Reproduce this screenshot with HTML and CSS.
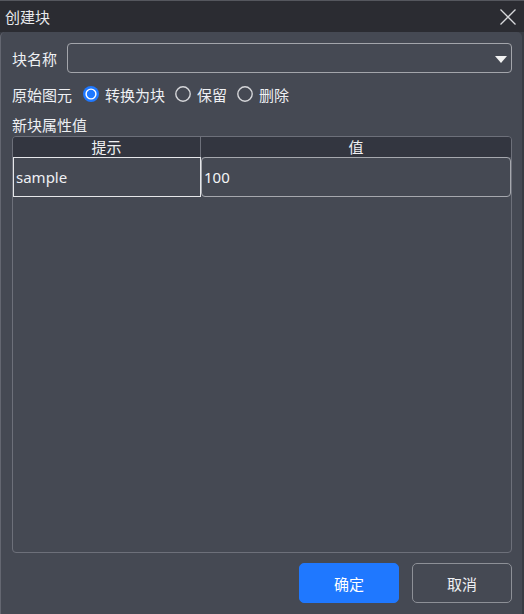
FILE: index.html
```html
<!DOCTYPE html>
<html lang="zh-CN">
<head>
<meta charset="utf-8">
<title>创建块</title>
<link rel="stylesheet" href="styles.css">
</head>
<body>
<div class="window">
  <div class="titlebar">
    <span class="title">创建块</span>
    <svg class="close" width="16" height="16" viewBox="0 0 16 16"><path d="M0.5 0.5 L15.5 15.5 M15.5 0.5 L0.5 15.5" stroke="#d8d9dc" stroke-width="1.3" fill="none"/></svg>
  </div>
  <div class="content">
    <div class="row name-row">
      <span class="label">块名称</span>
      <div class="combo">
        <svg class="arrow" width="12" height="7" viewBox="0 0 12 7"><path d="M0 0 H12 L6 7 Z" fill="#f2f2f2"/></svg>
      </div>
    </div>
    <div class="row radio-row">
      <span class="label">原始图元</span>
      <label class="radio">
        <svg width="16" height="16" viewBox="0 0 16 16"><circle cx="8" cy="8" r="8" fill="#1f78ff"/><circle cx="8" cy="8" r="5.6" fill="#ffffff"/><circle cx="8" cy="8" r="4.2" fill="#1f78ff"/></svg>
        <span>转换为块</span>
      </label>
      <label class="radio">
        <svg width="16" height="16" viewBox="0 0 16 16"><circle cx="8" cy="8" r="7.2" fill="none" stroke="#d6d7da" stroke-width="1.4"/></svg>
        <span>保留</span>
      </label>
      <label class="radio">
        <svg width="16" height="16" viewBox="0 0 16 16"><circle cx="8" cy="8" r="7.2" fill="none" stroke="#d6d7da" stroke-width="1.4"/></svg>
        <span>删除</span>
      </label>
    </div>
    <div class="section-label">新块属性值</div>
    <div class="table">
      <div class="thead">
        <div class="th col1">提示</div>
        <div class="th col2">值</div>
      </div>
      <div class="tr">
        <div class="td col1 selected">sample</div>
        <div class="td col2 editor">100</div>
      </div>
    </div>
    <div class="buttons">
      <button class="btn primary">确定</button>
      <button class="btn">取消</button>
    </div>
  </div>
</div>
</body>
</html>
```
FILE: styles.css
```css
html, body {
  margin: 0;
  padding: 0;
}
body {
  width: 524px;
  height: 614px;
  overflow: hidden;
  background: #383b43;
  font-family: "Noto Sans", "Noto Sans CJK SC", sans-serif;
  font-size: 15px;
  color: #eef0f3;
}
.window {
  width: 524px;
  height: 614px;
  display: flex;
  flex-direction: column;
}
.titlebar {
  height: 31px;
  border-top: 1px solid #55575e;
  background: #2b2c32;
  display: flex;
  align-items: center;
  justify-content: space-between;
  padding: 0 8px 0 5px;
}
.title {
  font-family: "Noto Sans CJK SC", sans-serif;
  font-size: 15px;
  color: #e8e9ec;
  line-height: 20px;
}
.close {
  display: block;
  margin-top: 1px;
}
.content {
  flex: 1;
  background: #454953;
  margin-right: 2px;
  border-left: 1px solid #646771;
  border-radius: 5px 5px 0 0;
  padding: 11px 10px 11px 11px;
  display: flex;
  flex-direction: column;
  min-height: 0;
}
.row {
  display: flex;
  align-items: center;
}
.label {
  font-family: "Noto Sans CJK SC", sans-serif;
  white-space: nowrap;
}
.name-row {
  height: 30px;
}
.name-row .label {
  margin-right: 10px;
}
.combo {
  flex: 1;
  height: 30px;
  box-sizing: border-box;
  border: 1px solid #a3a5ab;
  border-radius: 4px;
  display: flex;
  align-items: center;
  justify-content: flex-end;
  padding-right: 4px;
}
.arrow {
  display: block;
  margin-top: 3px;
}
.radio-row {
  height: 22px;
  margin-top: 10px;
}
.radio-row .label {
  margin-right: 11px;
}
.radio {
  display: flex;
  align-items: center;
  gap: 6px;
  margin-right: 10px;
  font-family: "Noto Sans CJK SC", sans-serif;
}
.radio svg {
  display: block;
}
.section-label {
  font-family: "Noto Sans CJK SC", sans-serif;
  height: 20px;
  line-height: 20px;
  margin-top: 10px;
}
.table {
  margin-top: 1px;
  flex: 1;
  border: 1px solid #6d707a;
  border-radius: 4px;
  overflow: hidden;
  display: flex;
  flex-direction: column;
}
.thead {
  display: flex;
  height: 20px;
  background: #333640;
}
.th {
  font-family: "Noto Sans CJK SC", sans-serif;
  text-align: center;
  line-height: 20px;
  font-size: 15px;
  color: #f0f1f3;
}
.col1 {
  width: 187px;
}
.th.col1 {
  border-right: 1px solid #6d707a;
}
.col2 {
  flex: 1;
}
.tr {
  display: flex;
  height: 40px;
}
.td {
  box-sizing: border-box;
  height: 40px;
  display: flex;
  align-items: center;
  font-family: "Noto Sans", sans-serif;
  font-size: 15px;
}
.td.selected {
  width: 188px;
  border: 1px solid #e6e7ea;
  padding-left: 2px;
}
.td.editor {
  border: 1px solid #a6a8ae;
  border-radius: 4px;
  padding-left: 2px;
  color: #f4f5f7;
}
.buttons {
  display: flex;
  justify-content: flex-end;
  gap: 13px;
  margin-top: 10px;
}
.btn {
  width: 100px;
  height: 40px;
  border-radius: 5px;
  border: 1px solid #8d9097;
  background: transparent;
  color: #eef0f3;
  font-family: "Noto Sans CJK SC", sans-serif;
  font-size: 15px;
  padding: 0;
}
.btn.primary {
  background: #1f78ff;
  border-color: #1f78ff;
  color: #ffffff;
}
```
